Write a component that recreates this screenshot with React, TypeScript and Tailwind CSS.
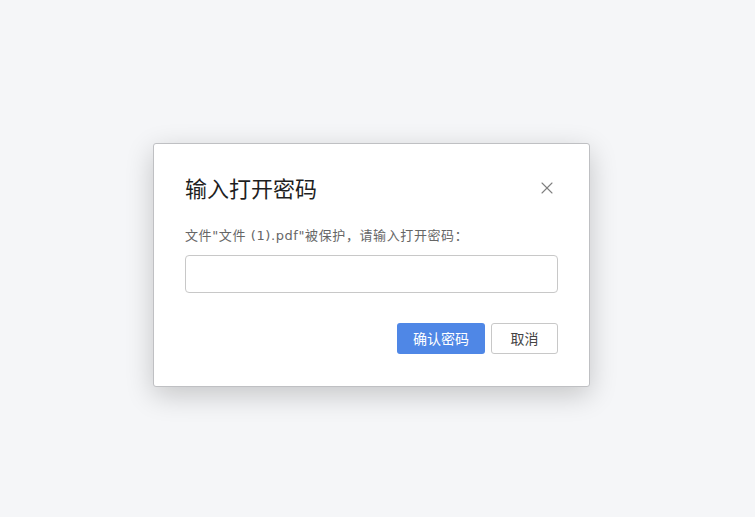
import { X } from "lucide-react";

const fontStack = "font-['Noto_Sans','Noto_Sans_CJK_SC',sans-serif]";

function PasswordDialog() {
  return (
    <div className="w-[437px] rounded-[3px] border border-[#bfc0c3] bg-white px-[31px] pb-[32px] pt-[29px] shadow-[0_8px_28px_rgba(0,0,0,0.2)]">
      <div className="flex h-[30px] items-center justify-between">
        <h2 className="text-[22px] leading-[30px] text-[#1f1f1f]">输入打开密码</h2>
        <button type="button" className="mr-[1px] text-[#7f7f7f]">
          <X size={20} strokeWidth={1.3} />
        </button>
      </div>
      <p className="mt-[23px] font-['DejaVu_Sans','Noto_Sans_CJK_SC',sans-serif] text-[13px] leading-5 tracking-[0.6px] text-[#666]">
        文件"文件 (1).pdf"被保护，请输入打开密码：
      </p>
      <input
        type="password"
        className="mt-[9px] block h-[38px] w-full rounded-[4px] border border-[#c8c8c8] px-3 text-[13px] outline-none"
      />
      <div className="mt-[30px] flex justify-end gap-[6px]">
        <button
          type="button"
          className="h-[31px] w-[88px] rounded-[3px] bg-[#4f87e6] text-[14px] text-white"
        >
          确认密码
        </button>
        <button
          type="button"
          className="h-[31px] w-[67px] rounded-[3px] border border-[#c8c8c8] bg-white text-[14px] text-[#444]"
        >
          取消
        </button>
      </div>
    </div>
  );
}

export default function App() {
  return (
    <div className={`${fontStack} h-[517px] w-full bg-[#f5f6f8] pl-[153px] pt-[143px]`}>
      <PasswordDialog />
    </div>
  );
}
